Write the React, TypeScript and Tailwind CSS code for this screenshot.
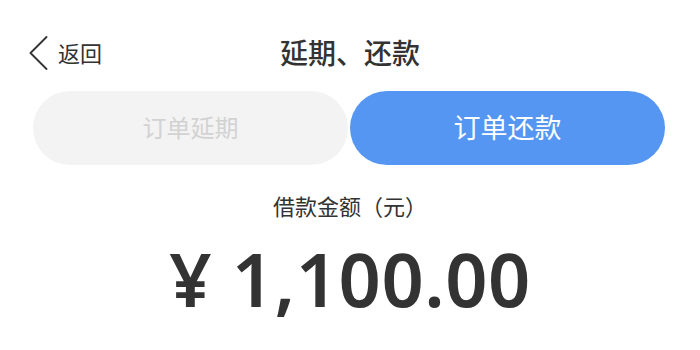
import React from "react";

export default function App() {
  return (
    <div
      className="w-[700px] h-[350px] bg-white overflow-hidden text-[#333]"
      style={{ fontFamily: '"Noto Sans", "Noto Sans CJK SC", sans-serif' }}
    >
      {/* header */}
      <div className="mt-[18px] h-[70px] grid grid-cols-[1fr_auto_1fr] items-center">
        <div className="flex items-center pl-[29px]">
          <svg width="19" height="34" viewBox="0 0 19 34" fill="none">
            <polyline
              points="17.5,1 1.5,17 17.5,33"
              stroke="#333"
              strokeWidth="1.8"
              strokeLinecap="round"
              strokeLinejoin="round"
            />
          </svg>
          <span className="ml-[10px] text-[22px] leading-none">返回</span>
        </div>
        <h1 className="text-[28px] font-medium leading-none">延期、还款</h1>
        <div />
      </div>

      {/* tabs */}
      <div className="mt-[3px] pl-[33px] pr-[35px] flex gap-[2px]">
        <button className="flex-1 h-[74px] rounded-full bg-[#f3f3f3] text-[24px] text-[#d2d2d2]">
          订单延期
        </button>
        <button className="flex-1 h-[74px] rounded-full bg-[#5596f2] text-[27px] text-white">
          订单还款
        </button>
      </div>

      {/* amount */}
      <p className="mt-[26px] text-center text-[22px] leading-[30px]">借款金额（元）</p>
      <p className="mt-[21px] text-center text-[74px] leading-none font-semibold tracking-[0.5px]">
        ¥ 1,100.00
      </p>
    </div>
  );
}
